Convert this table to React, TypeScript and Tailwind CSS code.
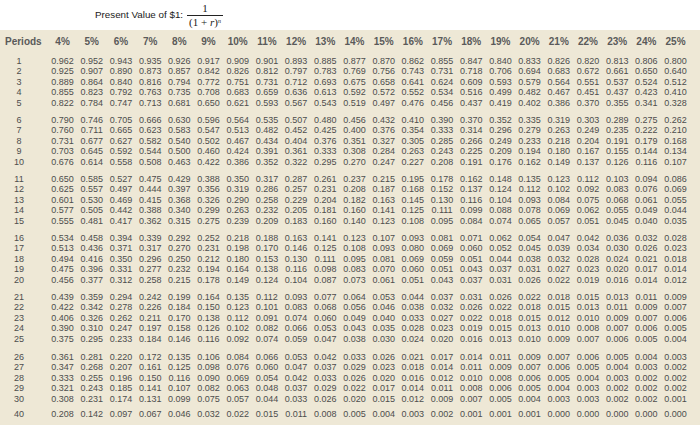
import React from "react";

const rates = Array.from({ length: 22 }, (_, i) => i + 4);
const groups: { periods: number[]; mt: string }[] = [
  { periods: [1, 2, 3, 4, 5], mt: "mt-[3.75px]" },
  { periods: [6, 7, 8, 9, 10], mt: "mt-[6.5px]" },
  { periods: [11, 12, 13, 14, 15], mt: "mt-[6.5px]" },
  { periods: [16, 17, 18, 19, 20], mt: "mt-[6.5px]" },
  { periods: [21, 22, 23, 24, 25], mt: "mt-[6.5px]" },
  { periods: [26, 27, 28, 29, 30], mt: "mt-[7.5px]" },
  { periods: [40], mt: "mt-[4.5px]" },
];

function pv(r: number, n: number) {
  return (1 / Math.pow(1 + r / 100, n)).toFixed(3);
}

export default function App() {
  return (
    <div className="w-[700px] h-[425px] bg-white overflow-hidden font-['Liberation_Sans',Arial,sans-serif]">
      <div className="h-[30px] flex items-center pl-[95px]">
        <span className="text-[9.8px] text-[#1a1a1a]">Present Value of $1:</span>
        <span className="ml-[4px] flex flex-col items-center font-['Liberation_Serif',serif] text-[11px] text-[#1a1a1a] leading-none">
          <span className="pb-[1px]">1</span>
          <span className="border-t border-[#222] px-[2px] pt-[1px]">
            (1 + <i>r</i>)<sup className="text-[6px] italic">n</sup>
          </span>
        </span>
      </div>
      <div className="bg-[#eee8d6] h-[395px]">
        <div className="flex h-[22px] items-center text-[10px] font-bold text-[#5a5a5a]">
          <div className="w-[48px] pl-[5px]">Periods</div>
          {rates.map((r) => (
            <div key={r} className="w-[29.2px] text-center">
              {r}%
            </div>
          ))}
        </div>
        {groups.map((g, gi) => (
          <div key={gi} className={g.mt}>
            {g.periods.map((n) => (
              <div key={n} className="flex h-[10.5px] items-center text-[9px] leading-none text-[#4d4d4d]">
                <div className="w-[48px]">
                  <div className="w-[38px] text-center">{n}</div>
                </div>
                {rates.map((r) => (
                  <div key={r} className="w-[29.2px] text-center">
                    {pv(r, n)}
                  </div>
                ))}
              </div>
            ))}
          </div>
        ))}
      </div>
    </div>
  );
}
